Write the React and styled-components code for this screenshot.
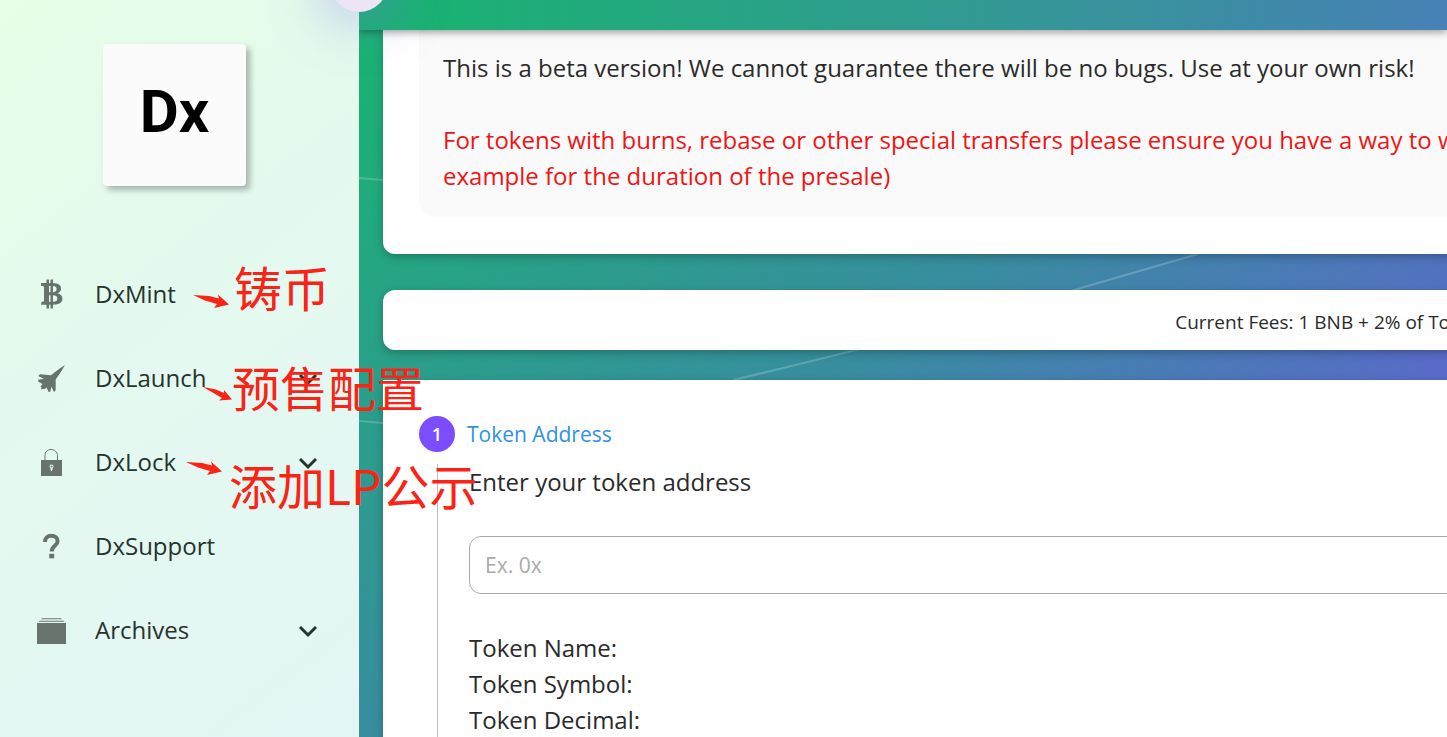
import styled, { createGlobalStyle } from "styled-components";

const NAV_ITEMS = [
  {
    name: "DxMint",
    Icon: MintIcon,
    note: { text: "铸币", left: 234, top: -44, arrowLeft: 192, arrowTop: -1 },
  },
  {
    name: "DxLaunch",
    Icon: LaunchIcon,
    expandable: true,
    note: { text: "预售配置", left: 232, top: -28, arrowLeft: 202, arrowTop: 8, steep: true },
  },
  {
    name: "DxLock",
    Icon: LockIcon,
    expandable: true,
    note: { text: "添加LP公示", left: 229, top: -14, arrowLeft: 185, arrowTop: -2 },
  },
  { name: "DxSupport", Icon: SupportIcon },
  { name: "Archives", Icon: ArchiveIcon, expandable: true },
];

export default function App() {
  return (
    <Page>
      <GlobalStyle />
      <Sidebar>
        <Logo href="#home">Dx</Logo>
        <nav>
          <NavList>
            {NAV_ITEMS.map((item) => (
              <NavItem key={item.name} {...item} />
            ))}
          </NavList>
        </nav>
        <SidebarToggle type="button" aria-label="Toggle menu" />
      </Sidebar>
      <Main>
        <BackgroundLines />
        <Header />
        <Content>
          <NoticeCard>
            <Notice>
              <Text>
                This is a beta version! We cannot guarantee there will be no
                bugs. Use at your own risk!
              </Text>
              <Warning>
                For tokens with burns, rebase or other special transfers please
                ensure you have a way to whitelist multiple addresses or turn
                off the special transfer events (By setting fees to 0 for
                <br />
                example for the duration of the presale)
              </Warning>
            </Notice>
          </NoticeCard>
          <FeesCard>Current Fees: 1 BNB + 2% of Tokens Raised</FeesCard>
          <FormCard>
            <StepHeader>
              <StepNumber>1</StepNumber>
              <StepTitle>Token Address</StepTitle>
            </StepHeader>
            <StepBody>
              <FieldLabel htmlFor="token-address">
                Enter your token address
              </FieldLabel>
              <AddressInput id="token-address" type="text" placeholder="Ex. 0x" />
              <Text>Token Name:</Text>
              <Text>Token Symbol:</Text>
              <Text>Token Decimal:</Text>
            </StepBody>
          </FormCard>
        </Content>
      </Main>
    </Page>
  );
}

function NavItem({ name, Icon, expandable, note }) {
  return (
    <NavRow>
      <NavLink href={`#${name.toLowerCase()}`}>
        <Icon />
        <NavText>{name}</NavText>
        {expandable && <Chevron />}
      </NavLink>
      {note && (
        <>
          <NoteArrow $left={note.arrowLeft} $top={note.arrowTop} steep={note.steep} />
          <Note $left={note.left} $top={note.top}>
            {note.text}
          </Note>
        </>
      )}
    </NavRow>
  );
}

function MintIcon() {
  return (
    <NavIcon viewBox="0 0 30 30">
      <path
        fillRule="evenodd"
        d="M6 0.500h2.500V4h1.500V0.500h2.500V4c5 .2 8 1.800 8 5.500 0 2.500-1.300 4-3.500 4.800 3.300.7 4.900 2.500 4.900 5.400 0 4-3.200 5.800-9.400 6v3.800H10v-3.700H8.500v3.700H6v-3.700H0.500l.5-3h1.500c.8 0 1-.4 1-1.200V8.500c0-1-.5-1.500-1.500-1.500H0.500V4H6zM8.500 7v6.200H10V7zM12.500 7v6.200c2.400-.1 3.600-1 3.600-3.100S14.900 7.100 12.500 7zM8.500 16.200v6.500H10v-6.500zM12.500 16.200v6.500c2.900 0 4.300-1 4.300-3.300s-1.500-3.200-4.300-3.200z"
        transform="translate(4.500 0)"
      />
    </NavIcon>
  );
}

function LaunchIcon() {
  return (
    <NavIcon viewBox="0 0 30 30">
      <path d="M29 2 23 6 15 12.200 4 11.200 2.200 13 8 16 2.500 16.500 2 18.500 6.500 21 4.500 23.500 5.500 24.500 4.800 26.500 7.200 25.800 8 26.600 10.600 24.500 12.600 29 14.500 28.600 15.300 23.800 18 29 19.700 27.300 19.700 16.500 25.500 8z" />
    </NavIcon>
  );
}

function LockIcon() {
  return (
    <NavIcon viewBox="0 0 30 30">
      <path
        d="M9 13V8.500C9 5 11.500 2.500 15 2.500S21.500 5 21.500 8.500V13"
        fill="none"
        stroke="currentColor"
      />
      <path
        fillRule="evenodd"
        d="M5 13h21v16H5zM15.500 17.500a2 2 0 0 0-1.200 3.600L15 24h1l.7-2.900a2 2 0 0 0-1.200-3.600zM15.500 18.600a1 1 0 1 1 0 2 1 1 0 0 1 0-2z"
      />
    </NavIcon>
  );
}

function SupportIcon() {
  return (
    <NavIcon viewBox="0 0 30 30">
      <path
        d="M9 11C9 7 11.500 4.800 15.300 4.800s6.300 2 6.300 5.400c0 4.600-5.900 4.800-5.900 10.200"
        fill="none"
        stroke="currentColor"
        strokeWidth="4"
      />
      <path d="M13.200 22.800h5v4.500h-5z" />
    </NavIcon>
  );
}

function ArchiveIcon() {
  return (
    <NavIcon viewBox="0 0 30 30">
      <path d="M1 8h29v21H1zM3.500 5.800h24l1 1H2.500zM6 3.300h19l1 1H5z" />
    </NavIcon>
  );
}

function Chevron() {
  return (
    <ChevronSvg viewBox="0 0 20 20">
      <path d="M2 7l8 8 8-8" fill="none" stroke="currentColor" strokeWidth="3" />
    </ChevronSvg>
  );
}

function NoteArrow({ steep, ...rest }) {
  return (
    <ArrowSvg viewBox="0 0 38 18" {...rest}>
      {steep ? (
        <path d="M1 1 14 3.500 22 7 22 4 30 13.500 17 14.500 20 12z" />
      ) : (
        <path d="M1 2 17 3 27 5.500 26 1.500 37 11.500 22 15 25 11 13 7.500z" />
      )}
    </ArrowSvg>
  );
}

function BackgroundLines() {
  return (
    <LinesSvg>
      <path d="M0 178 24 180M0 421 24 423M374 380C480 355 600 325 715 290L839 254" />
    </LinesSvg>
  );
}

const GlobalStyle = createGlobalStyle`
  * {
    box-sizing: border-box;
  }
  body {
    margin: 0;
    overflow: hidden;
    font-family: "Open Sans", "Noto Sans CJK SC", sans-serif;
    font-size: 24px;
    line-height: 36px;
    color: #2a2a2a;
  }
`;

const Page = styled.div`
  display: grid;
  grid-template-columns: 359px minmax(0, 1fr);
  height: 100vh;
`;

const Sidebar = styled.aside`
  position: relative;
  z-index: 2;
  padding-top: 44px;
  background: linear-gradient(142deg, #e6ffe6 0%, #e4faec 30%, #e4f8f2 65%, #e4f5f5 100%);
`;

const Logo = styled.a`
  display: flex;
  align-items: center;
  justify-content: center;
  width: 143px;
  height: 142px;
  margin: 0 0 66px 103px;
  padding-bottom: 6px;
  border-radius: 4px;
  background: #fbfbfb;
  box-shadow: 4px 4px 6px rgba(0, 0, 0, 0.28);
  font-family: "Liberation Sans Narrow", Roboto, sans-serif;
  font-size: 60px;
  font-weight: 700;
  color: #000;
  text-decoration: none;
`;

const NavList = styled.ul`
  margin: 0;
  padding: 0;
  list-style: none;
`;

const NavRow = styled.li`
  position: relative;
`;

const NavLink = styled.a`
  display: flex;
  align-items: center;
  height: 84px;
  padding: 0 41px 0 36px;
  color: #26332e;
  text-decoration: none;
`;

const NavIcon = styled.svg`
  width: 30px;
  height: 30px;
  margin-right: 29px;
  fill: currentColor;
  color: #68736e;
`;

const NavText = styled.span`
  flex: 1;
`;

const ChevronSvg = styled.svg`
  width: 20px;
  height: 20px;
`;

const Note = styled.span`
  position: absolute;
  left: ${(props) => props.$left}px;
  top: calc(50% + ${(props) => props.$top}px);
  font-family: "Noto Sans CJK SC", sans-serif;
  font-size: 48px;
  line-height: 72px;
  white-space: nowrap;
  color: #fb2216;
  pointer-events: none;
`;

const ArrowSvg = styled.svg`
  position: absolute;
  left: ${(props) => props.$left}px;
  top: calc(50% + ${(props) => props.$top}px);
  width: 38px;
  height: 18px;
  fill: #fb2216;
`;

const SidebarToggle = styled.button`
  position: absolute;
  top: -46px;
  right: -29px;
  width: 58px;
  height: 58px;
  border: 0;
  border-radius: 50%;
  background: #ece5f5;
  box-shadow: 0 0 56px 8px rgba(124, 110, 235, 0.4);
`;

const Main = styled.main`
  position: relative;
  overflow: hidden;
  background: linear-gradient(142deg, #1bb174 4%, #388d9f 47%, #5b68cb 79%, #6a56dc 100%);
`;

const LinesSvg = styled.svg`
  position: absolute;
  inset: 0;
  width: 100%;
  height: 100%;
  fill: none;
  stroke: rgba(255, 255, 255, 0.2);
  stroke-width: 2;
`;

const Header = styled.header`
  position: relative;
  z-index: 1;
  height: 30px;
  background: linear-gradient(90deg, #1bb174 0%, #1bb174 8%, #339894 59%, #4781b6 100%);
  box-shadow: 0 2px 8px rgba(0, 0, 0, 0.4);
`;

/* Wider than most windows, the overflow is cut at the right edge */
const Content = styled.div`
  position: relative;
  min-width: 2012px;
  padding: 0 24px;
  white-space: nowrap;
`;

const Card = styled.section`
  background: #fff;
  border-radius: 12px;
  box-shadow: 0 3px 8px rgba(0, 0, 0, 0.25);
`;

const NoticeCard = styled(Card)`
  margin-bottom: 36px;
  padding: 0 36px 37px;
  border-top-left-radius: 0;
  border-top-right-radius: 0;
`;

const Notice = styled.div`
  padding: 20px 24px 23px;
  border-radius: 0 0 18px 18px;
  background: #fafafa;
`;

const Text = styled.p`
  margin: 0;
`;

const Warning = styled(Text)`
  margin-top: 36px;
  color: #f01414;
`;

const FeesCard = styled(Card)`
  margin-bottom: 30px;
  padding: 17px 36px 13px;
  font-size: 19px;
  line-height: 30px;
  text-align: center;
`;

const FormCard = styled(Card)`
  min-height: 400px;
  padding: 36px;
  border-radius: 0;
`;

const StepHeader = styled.div`
  display: flex;
  align-items: center;
  gap: 12px;
`;

const StepNumber = styled.span`
  display: flex;
  align-items: center;
  justify-content: center;
  width: 36px;
  height: 36px;
  border-radius: 50%;
  background: #7c4dff;
  font-size: 18px;
  font-weight: 600;
  color: #fff;
`;

const StepTitle = styled.h2`
  margin: 0;
  font-size: 21px;
  font-weight: 400;
  color: #2f92e6;
`;

const StepBody = styled.div`
  margin: 12px 0 0 18px;
  padding-left: 31px;
  border-left: 1px solid #bdbdbd;
`;

const FieldLabel = styled.label`
  display: block;
`;

const AddressInput = styled.input`
  display: block;
  width: 100%;
  height: 58px;
  margin: 36px 0;
  padding: 0 15px;
  border: 1px solid #a9a9a9;
  border-radius: 12px;
  background: #fff;
  font-family: inherit;
  font-size: 21px;
  color: inherit;
  &::placeholder {
    color: #aaa;
  }
`;
